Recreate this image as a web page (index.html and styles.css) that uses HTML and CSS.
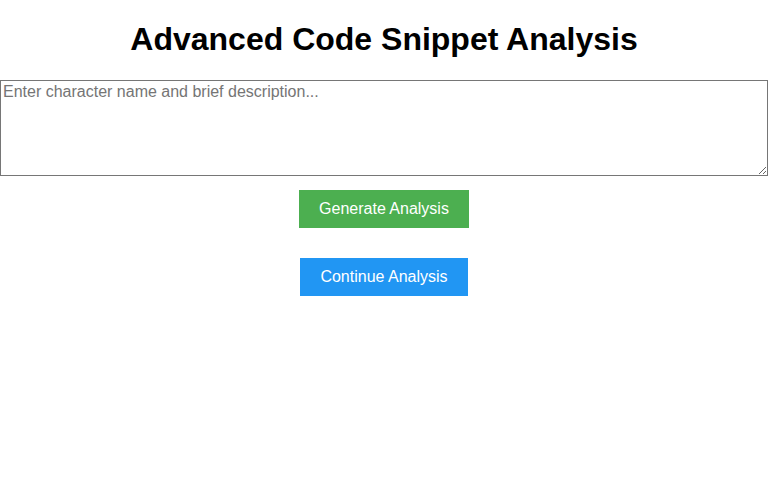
FILE: index.html
```html
<!DOCTYPE html>
<html lang="en">
<head>
    <meta charset="UTF-8">
    <meta name="viewport" content="width=device-width, initial-scale=1.0">
    <title>Advanced Code Snippet Analysis</title>
    <link rel="stylesheet" href="styles.css">
</head>
<body>
    <h1 class="title">Advanced Code Snippet Analysis</h1>

    <!-- 输入区 -->
    <textarea class="prompt-input" placeholder="Enter character name and brief description..."></textarea>

    <!-- 操作按钮 -->
    <div class="actions">
        <button class="btn btn-generate">Generate Analysis</button>
        <button class="btn btn-continue">Continue Analysis</button>
    </div>
</body>
</html>
```

FILE: styles.css
```css
/* ========== 基础 ========== */
* {
    box-sizing: border-box;
}

body {
    margin: 0;
    background: #fff;
    font-family: 'Liberation Sans', Arial, sans-serif;
}

.title {
    font-size: 32px;
    line-height: 37px;
    margin: 21px 0 22px;
    text-align: center;
}

/* ========== 输入区 ========== */
.prompt-input {
    display: block;
    width: 100%;
    height: 96px;
    margin: 0;
    padding: 2px;
    border: 1px solid #767676;
    font: 16px/18px 'Liberation Sans', Arial, sans-serif;
    resize: vertical;
}

.prompt-input::placeholder {
    color: #757575;
}

/* ========== 按钮 ========== */
.actions {
    display: flex;
    flex-direction: column;
    align-items: center;
    gap: 30px;
    padding-top: 14px;
}

.btn {
    border: none;
    padding: 10px 20px;
    color: #fff;
    font: 16px/18px 'Liberation Sans', Arial, sans-serif;
    cursor: pointer;
}

.btn-generate {
    background: #4CAF50;
}

.btn-continue {
    background: #2196F3;
}
```
